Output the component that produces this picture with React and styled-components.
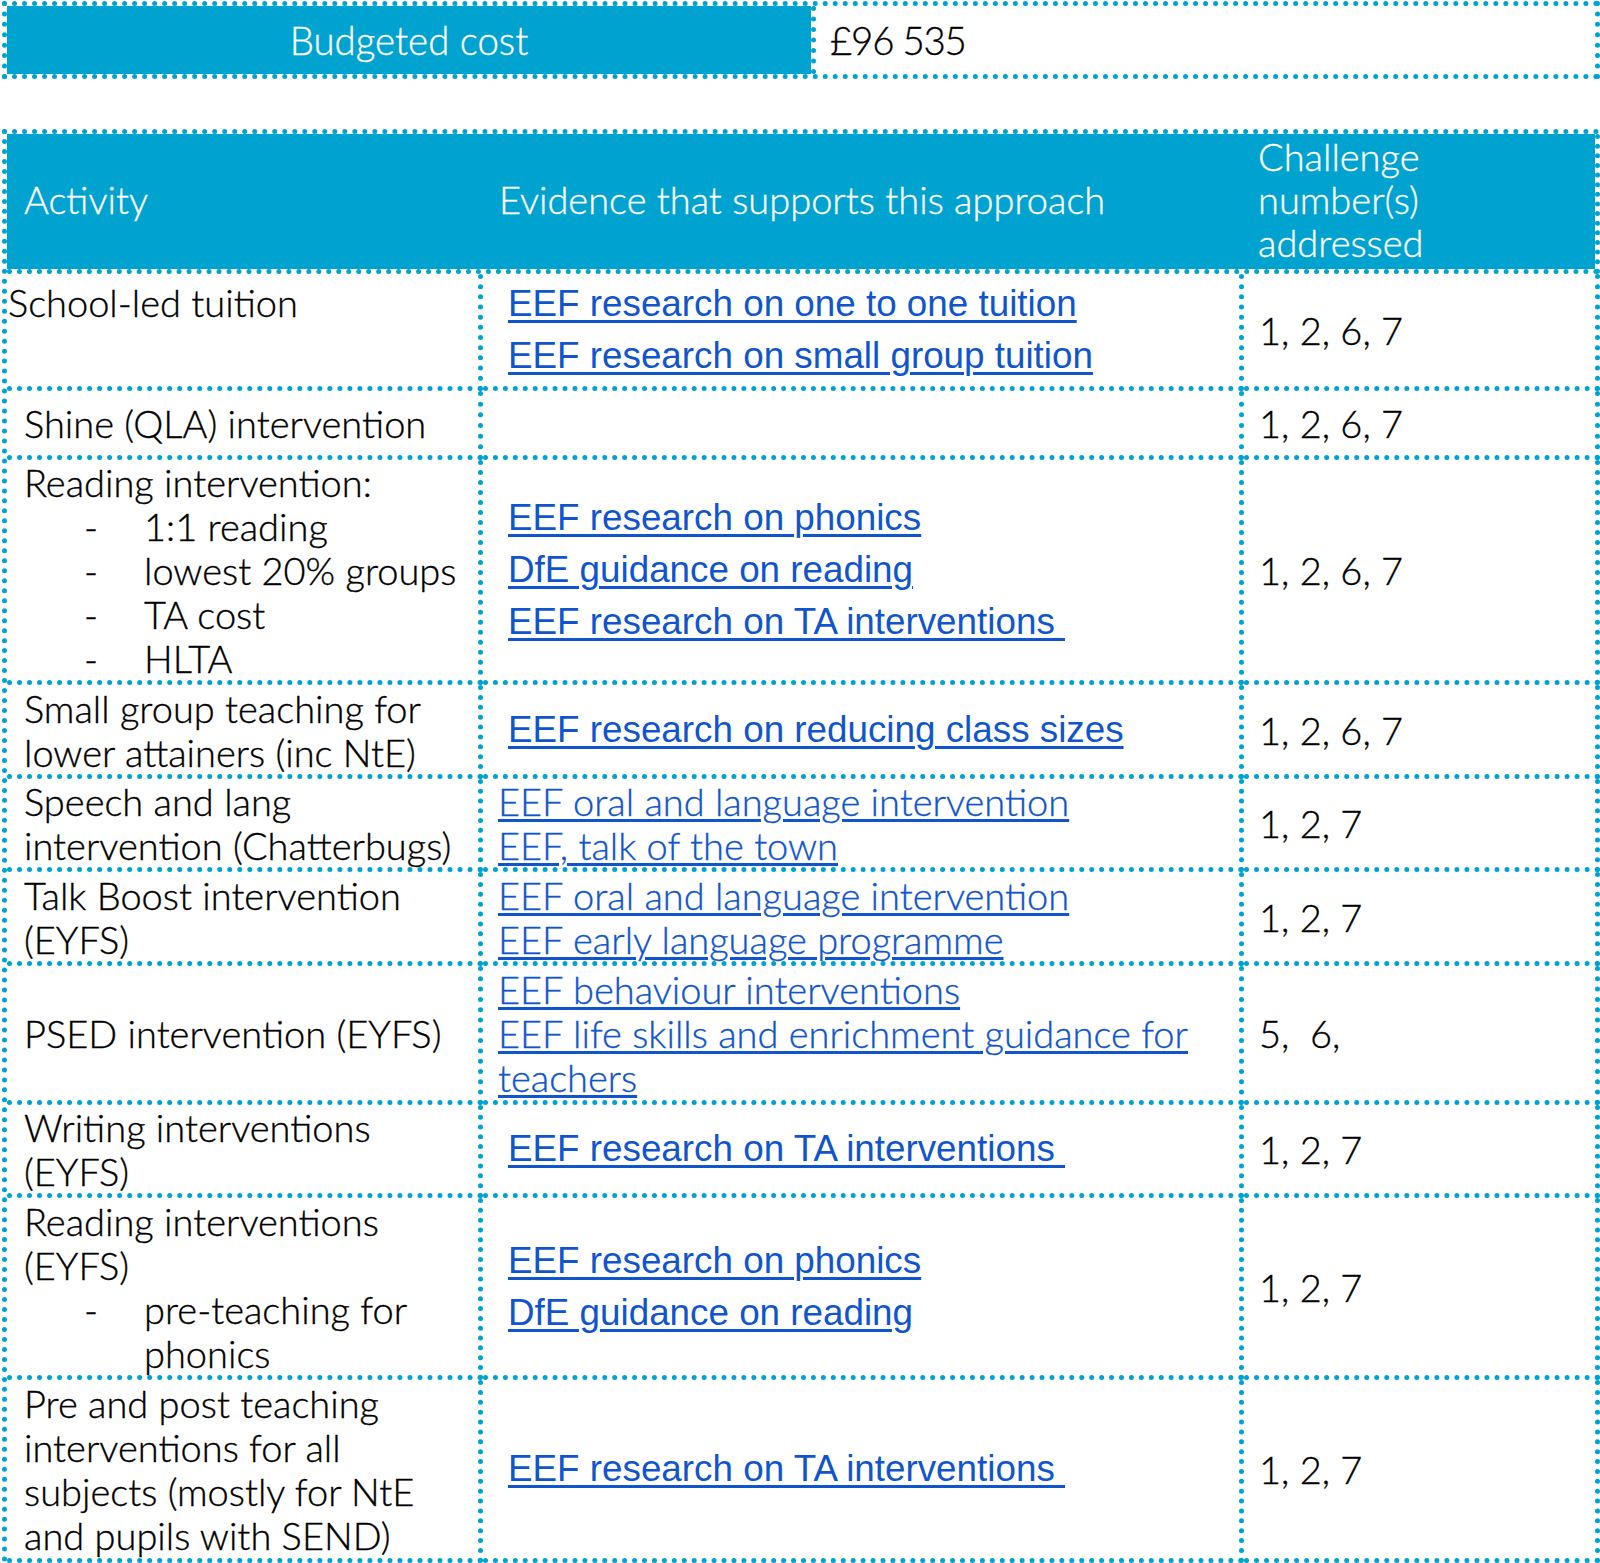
import React from 'react';
import styled, { createGlobalStyle } from 'styled-components';

const BLUE = '#00a3d0';
const DOT = `5px dotted ${BLUE}`;
const LINK = '#1155cc';

const GlobalStyle = createGlobalStyle`
  html, body { margin: 0; padding: 0; background: #fff; }
  body { font-family: Lato, "Liberation Sans", sans-serif; color: #000; }
`;

const Page = styled.main`
  width: 1600px;
  box-sizing: border-box;
  padding: 1px 0 0 2px;
`;

const BudgetBox = styled.section`
  display: flex;
  width: 1598px;
  height: 78px;
  box-sizing: border-box;
  border: ${DOT};
  font-family: Lato, sans-serif;
  font-weight: 300;
  font-size: 38.4px;
  -webkit-text-stroke: 0.35px currentColor;
`;

const BudgetLabel = styled.div`
  flex: 0 0 809px;
  box-sizing: border-box;
  display: flex;
  align-items: center;
  justify-content: center;
  background: ${BLUE};
  background-clip: padding-box;
  border-right: ${DOT};
  color: #fff;
`;

const BudgetValue = styled.div`
  flex: 1;
  display: flex;
  align-items: center;
  padding-left: 14px;
  letter-spacing: -1.2px;
  color: #000;
`;

const Table = styled.section`
  margin-top: 50px;
  width: 1598px;
  box-sizing: border-box;
  border-top: ${DOT};
  border-left: ${DOT};
  font-family: Lato, sans-serif;
  font-weight: 300;
  font-size: 38px;
  line-height: 44px;
  -webkit-text-stroke: 0.35px currentColor;
  color: #000;
`;

const HeadRow = styled.div`
  display: grid;
  grid-template-columns: 476px 761px 351px;
  min-height: 140px;
  box-sizing: border-box;
  background: ${BLUE};
  background-clip: padding-box;
  border-right: ${DOT};
  border-bottom: ${DOT};
  color: #fff;
`;

const HeadCell = styled.div`
  display: flex;
  flex-direction: column;
  justify-content: center;
  line-height: 43px;
  padding: 0 0 4px ${(p) => p.$pl}px;
`;

const Row = styled.div`
  display: grid;
  grid-template-columns: 476px 761px 356px;
  min-height: ${(p) => p.$h}px;
`;

const Cell = styled.div`
  box-sizing: border-box;
  display: flex;
  flex-direction: column;
  justify-content: ${(p) => (p.$top ? 'flex-start' : 'center')};
  padding: ${(p) => p.$pt || 0}px 6px 0 ${(p) => p.$pl}px;
  border-right: ${DOT};
  border-bottom: ${DOT};
`;

const Line = styled.span`
  display: block;
  white-space: nowrap;
`;

const Item = styled.div`
  display: grid;
  grid-template-columns: 60px auto;
  padding-left: 60px;
  white-space: nowrap;
`;

const SansLink = styled.a`
  display: block;
  width: max-content;
  font-family: "Liberation Sans", Arial, sans-serif;
  font-weight: 400;
  font-size: 36.8px;
  line-height: 52px;
  -webkit-text-stroke: 0;
  white-space: pre;
  color: ${LINK};
  text-decoration: underline;
  text-decoration-thickness: 3px;
  text-underline-offset: 4px;
`;

const SoftLink = styled.a`
  display: block;
  width: max-content;
  white-space: pre;
  color: ${LINK};
  text-decoration: underline;
  text-decoration-thickness: 2.5px;
  text-underline-offset: 3px;
`;

const Numbers = styled.span`
  white-space: pre;
`;

const rows = [
  {
    h: 117,
    activity: ['School-led tuition'],
    first: true,
    links: ['EEF research on one to one tuition', 'EEF research on small group tuition'],
    sans: true,
    ch: '1, 2, 6, 7',
  },
  { h: 69, activity: ['Shine (QLA) intervention'], links: [], sans: true, ch: '1, 2, 6, 7' },
  {
    h: 225,
    activity: ['Reading intervention:'],
    items: [['1:1 reading'], ['lowest 20% groups'], ['TA cost'], ['HLTA']],
    links: ['EEF research on phonics', 'DfE guidance on reading', 'EEF research on TA interventions '],
    sans: true,
    ch: '1, 2, 6, 7',
  },
  {
    h: 94,
    activity: ['Small group teaching for', 'lower attainers (inc NtE)'],
    links: ['EEF research on reducing class sizes'],
    sans: true,
    ch: '1, 2, 6, 7',
  },
  {
    h: 93,
    activity: ['Speech and lang', 'intervention (Chatterbugs)'],
    links: ['EEF oral and language intervention', 'EEF, talk of the town'],
    ch: '1, 2, 7',
  },
  {
    h: 94,
    activity: ['Talk Boost intervention', '(EYFS)'],
    links: ['EEF oral and language intervention', 'EEF early language programme'],
    ch: '1, 2, 7',
  },
  {
    h: 139,
    activity: ['PSED intervention (EYFS)'],
    links: ['EEF behaviour interventions', 'EEF life skills and enrichment guidance for\nteachers'],
    ch: '5,  6,',
  },
  {
    h: 92,
    activity: ['Writing interventions', '(EYFS)'],
    links: ['EEF research on TA interventions '],
    sans: true,
    ch: '1, 2, 7',
  },
  {
    h: 182,
    activity: ['Reading interventions', '(EYFS)'],
    items: [['pre-teaching for', 'phonics']],
    links: ['EEF research on phonics', 'DfE guidance on reading'],
    sans: true,
    ch: '1, 2, 7',
  },
  {
    h: 183,
    activity: ['Pre and post teaching', 'interventions for all', 'subjects (mostly for NtE', 'and pupils with SEND)'],
    links: ['EEF research on TA interventions '],
    sans: true,
    ch: '1, 2, 7',
  },
];

function ActivityCell({ row }) {
  return (
    <Cell $pl={row.first ? 1 : 17} $pt={row.first ? 6 : 0} $top={row.first}>
      {row.activity.map((t) => (
        <Line key={t}>{t}</Line>
      ))}
      {(row.items || []).map((lines) => (
        <Item key={lines[0]}>
          <span>-</span>
          <span>
            {lines.map((l) => (
              <Line key={l}>{l}</Line>
            ))}
          </span>
        </Item>
      ))}
    </Cell>
  );
}

function EvidenceCell({ row }) {
  const LinkKind = row.sans ? SansLink : SoftLink;
  return (
    <Cell $pl={row.sans ? 25 : 15}>
      {row.links.map((l, i) => (
        <LinkKind key={i} href="#">
          {l}
        </LinkKind>
      ))}
    </Cell>
  );
}

export default function App() {
  return (
    <>
      <GlobalStyle />
      <Page>
        <BudgetBox>
          <BudgetLabel>Budgeted cost</BudgetLabel>
          <BudgetValue>£96 535</BudgetValue>
        </BudgetBox>
        <Table>
          <HeadRow>
            <HeadCell $pl={17}>Activity</HeadCell>
            <HeadCell $pl={16}>Evidence that supports this approach</HeadCell>
            <HeadCell $pl={14}>
              <Line>Challenge</Line>
              <Line>number(s)</Line>
              <Line>addressed</Line>
            </HeadCell>
          </HeadRow>
          {rows.map((row, i) => (
            <Row key={i} $h={row.h}>
              <ActivityCell row={row} />
              <EvidenceCell row={row} />
              <Cell $pl={15}>
                <Numbers>{row.ch}</Numbers>
              </Cell>
            </Row>
          ))}
        </Table>
      </Page>
    </>
  );
}
